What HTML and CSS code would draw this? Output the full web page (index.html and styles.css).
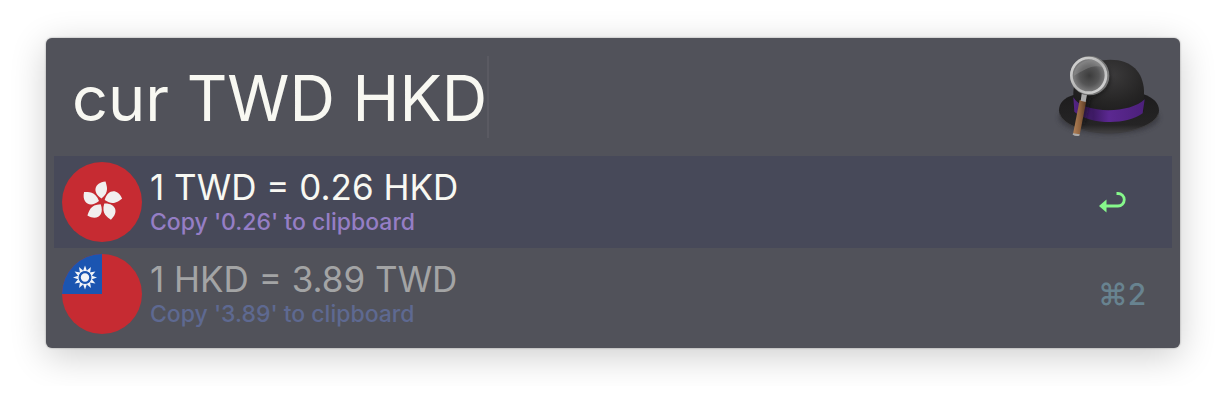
FILE: index.html
```html
<!DOCTYPE html>
<html lang="en">
<head>
<meta charset="utf-8">
<title>Currency conversion</title>
<link rel="stylesheet" href="styles.css">
</head>
<body>
<main class="launcher">
  <header class="search">
    <input class="query" type="text" value="cur TWD HKD" aria-label="Search" spellcheck="false">
    <svg class="hat" viewBox="0 6 360 300" aria-hidden="true">
      <defs>
        <radialGradient id="crown" cx=".55" cy=".25" r=".75"><stop offset="0" stop-color="#3b3a3b"/><stop offset=".6" stop-color="#262525"/><stop offset="1" stop-color="#1b1a1b"/></radialGradient>
        <linearGradient id="brim" x1="0" y1="0" x2="0" y2="1"><stop offset="0" stop-color="#1d1c1d"/><stop offset=".8" stop-color="#252425"/><stop offset="1" stop-color="#414042"/></linearGradient>
        <linearGradient id="band"><stop offset="0" stop-color="#542485"/><stop offset=".28" stop-color="#3d1a64"/><stop offset=".5" stop-color="#5b2891"/><stop offset="1" stop-color="#4c207a"/></linearGradient>
        <radialGradient id="lens"><stop offset="0" stop-color="#3c3c3c"/><stop offset=".55" stop-color="#555556"/><stop offset="1" stop-color="#858586"/></radialGradient>
        <linearGradient id="rim" x1="0" y1="0" x2="1" y2="1"><stop offset="0" stop-color="#d8d8d8"/><stop offset=".5" stop-color="#b5b5b5"/><stop offset="1" stop-color="#d9d9d9"/></linearGradient>
        <linearGradient id="wood"><stop offset="0" stop-color="#b28258"/><stop offset=".5" stop-color="#916440"/><stop offset="1" stop-color="#5b3b24"/></linearGradient>
        <filter id="soft" x="-30%" y="-30%" width="160%" height="160%"><feGaussianBlur stdDeviation="6"/></filter>
      </defs>
      <ellipse cx="177" cy="218" rx="151" ry="51" fill="#333238" opacity=".6" filter="url(#soft)"/>
      <path d="M70 150C42 158 27 175 27 196c0 40 73 67 150 67s150-27 150-67c0-21-17-38-46-48z" fill="url(#brim)"/>
      <path d="M29 207c12 35 78 57 148 57s137-24 148-57" fill="none" stroke="#3d3c3e" stroke-width="3"/>
      <path d="M70 190V145C70 88 110 44 181 44c65 0 98 38 101 92v62c-40 38-168 39-212-8z" fill="url(#crown)"/>
      <path d="M70 157c27 50 170 51 214 6l-6 42c-48 37-160 34-205-5z" fill="url(#band)"/>
      <path d="M122 50c52 0 75 50 43 86l-43 25-17 74-20 4 15-78z" fill="#111" opacity=".55" filter="url(#soft)"/>
      <path d="M89 165l20 2-20 103q-11 6-20-2z" fill="url(#wood)"/>
      <path d="M69 265l20 3-1 4q-10 3-20-3z" fill="#aaa"/>
      <path d="M95 147l16 2-4 22-15-4z" fill="#aaaaab"/>
      <circle cx="118" cy="92" r="53" fill="url(#lens)"/>
      <path d="M72 92c0-45 67-66 86-25-29-11-55 8-86 25z" fill="#aaa" opacity=".3"/>
      <circle cx="119" cy="92" r="54" fill="none" stroke="#777" stroke-width="10"/>
      <circle cx="116" cy="91" r="52" fill="none" stroke="url(#rim)" stroke-width="8"/>
    </svg>
  </header>
  <ul class="results">
    <li>
      <button class="result selected" type="button">
        <svg class="flag" viewBox="0 0 80 80" aria-hidden="true">
          <defs><path id="petal" d="M39.500 36.500C30 30.500 32 20.500 43.500 19.500C44.500 23.500 48 30 39.500 36.500z"/></defs>
          <circle cx="40" cy="40" r="40" fill="#c62b32"/>
          <g fill="#f1efef">
            <use href="#petal"/>
            <use href="#petal" transform="rotate(72 40 39.500)"/>
            <use href="#petal" transform="rotate(144 40 39.500)"/>
            <use href="#petal" transform="rotate(216 40 39.500)"/>
            <use href="#petal" transform="rotate(288 40 39.500)"/>
          </g>
        </svg>
        <span class="copy"><span class="title">1 TWD = 0.26 HKD</span><span class="subtitle">Copy '0.26' to clipboard</span></span>
        <span class="shortcut"><svg class="enter" viewBox="0 0 28 24" role="img" aria-label="Return"><path d="M1 16l7.500-6.500v13z" fill="#86f88b"/><path d="M8 16h12a6 6 0 0 0 0-12.500h-1.500" fill="none" stroke="#86f88b" stroke-width="2.800"/></svg></span>
      </button>
    </li>
    <li>
      <button class="result" type="button">
        <svg class="flag" viewBox="0 0 80 80" aria-hidden="true">
          <defs>
            <path id="ray" d="M-2.100-6.300L0-12 2.100-6.300z"/>
            <g id="rays"><use href="#ray"/><use href="#ray" transform="rotate(30)"/><use href="#ray" transform="rotate(60)"/></g>
          </defs>
          <circle cx="40" cy="40" r="40" fill="#c62b32"/>
          <path d="M40 0v40H0A40 40 0 0 1 40 0z" fill="#1b55b1"/>
          <g fill="#f3f5f8" transform="translate(23 23.500)">
            <use href="#rays"/>
            <use href="#rays" transform="rotate(90)"/>
            <use href="#rays" transform="rotate(180)"/>
            <use href="#rays" transform="rotate(270)"/>
            <circle r="5.200" stroke="#1b55b1" stroke-width="2"/>
          </g>
        </svg>
        <span class="copy"><span class="title">1 HKD = 3.89 TWD</span><span class="subtitle">Copy '3.89' to clipboard</span></span>
        <span class="shortcut">⌘2</span>
      </button>
    </li>
  </ul>
</main>
</body>
</html>
```
FILE: styles.css
```css
* { box-sizing: border-box; }

body {
  margin: 0;
  padding: 38px 46px;
  background: #fff;
  font-family: Inter, "Liberation Sans", sans-serif;
}

.launcher {
  padding: 0 8px 8px;
  border-radius: 6px;
  background: #51525a;
  box-shadow: 0 0 2px rgb(0 0 0 / 40%), 0 8px 36px rgb(0 0 0 / 20%);
}

.search {
  display: flex;
  align-items: center;
  justify-content: space-between;
  height: 118px;
  padding: 0 2px 0 18px;
}

.query {
  field-sizing: content;
  height: 82px;
  padding: 2px 0 0;
  border: 0;
  border-right: 2px solid #5a5a62;
  outline: 0;
  background: none;
  color: #f8f8f2;
  font: 400 63px Inter, "Liberation Sans", sans-serif;
}

.hat {
  flex: none;
  width: 120px;
  height: 100px;
}

.results {
  margin: 0;
  padding: 0;
  list-style: none;
}

.result {
  display: flex;
  align-items: center;
  gap: 8px;
  width: 100%;
  height: 92px;
  padding: 0 8px;
  border: 0;
  background: none;
  color: #a3a4a5;
  font: inherit;
  text-align: left;
}

.selected {
  background: #474959;
  color: #f8f8f2;
}

.flag {
  flex: none;
  width: 80px;
  height: 80px;
}

.copy { flex: 1; }

.title,
.subtitle { display: block; }

.title {
  font-size: 35px;
  line-height: 41px;
}

.subtitle {
  color: #5e6991;
  font-size: 23px;
  font-weight: 500;
  line-height: 29px;
}

.selected .subtitle { color: #957ec5; }

.shortcut {
  width: 66px;
  color: #688390;
  font-size: 30px;
  font-weight: 500;
  line-height: 40px;
}

.enter {
  display: block;
  width: 28px;
  height: 24px;
}
```
